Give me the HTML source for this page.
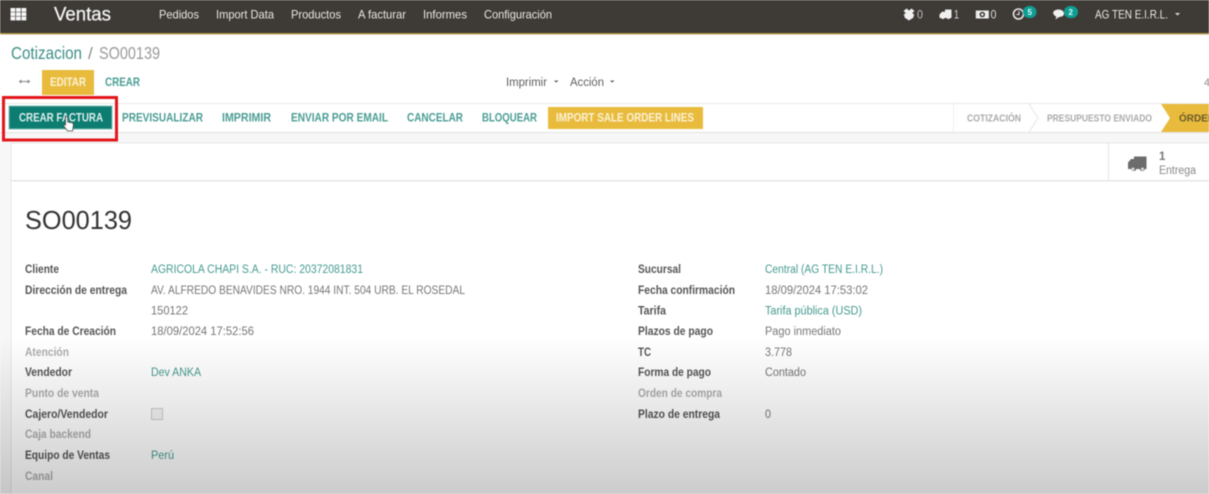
<!DOCTYPE html>
<html lang="es"><head><meta charset="utf-8"><title>Ventas</title>
<style>
html,body{margin:0;padding:0;width:1209px;height:494px;overflow:hidden;background:#fff}
svg{display:block;filter:blur(.45px)}
text{font-family:"Liberation Sans",sans-serif;font-size:11px}
.n{fill:#ebe9e5;font-size:12px}
.l{fill:#555;font-weight:bold;font-size:11.5px}
.m{fill:#adadad;font-weight:bold;font-size:11.5px}
.v{fill:#767676;font-size:11.5px}
.a{fill:#459a91;font-size:11.5px}
.b{fill:#4a9d94;font-weight:bold;font-size:11.5px}
.s{fill:#aaa;font-weight:bold;font-size:10px}
</style></head><body>
<svg width="1209" height="494" viewBox="0 0 1209 494" xmlns="http://www.w3.org/2000/svg">
<rect width="1209" height="494" fill="#fff"/>
<!-- nav -->
<rect width="1209" height="33" fill="#3e3a36"/>
<rect y="33" width="1209" height="1.500" fill="#b59a4c"/>
<g fill="#f7f7f7">
<rect x="10.500" y="8" width="4.800" height="3.800"/><rect x="16" y="8" width="4.800" height="3.800"/><rect x="21.500" y="8" width="4.800" height="3.800"/>
<rect x="10.500" y="12.300" width="4.800" height="3.800"/><rect x="16" y="12.300" width="4.800" height="3.800"/><rect x="21.500" y="12.300" width="4.800" height="3.800"/>
<rect x="10.500" y="16.600" width="4.800" height="3.800"/><rect x="16" y="16.600" width="4.800" height="3.800"/><rect x="21.500" y="16.600" width="4.800" height="3.800"/>
</g>
<text x="54" y="20.500" textLength="57" lengthAdjust="spacingAndGlyphs" style="font-size:19.500px" fill="#f6f6f6" stroke="#f6f6f6" stroke-width=".25">Ventas</text>
<text class="n" x="159" y="18.500" textLength="40" lengthAdjust="spacingAndGlyphs">Pedidos</text>
<text class="n" x="216" y="18.500" textLength="58" lengthAdjust="spacingAndGlyphs">Import Data</text>
<text class="n" x="291" y="18.500" textLength="50" lengthAdjust="spacingAndGlyphs">Productos</text>
<text class="n" x="358" y="18.500" textLength="48" lengthAdjust="spacingAndGlyphs">A facturar</text>
<text class="n" x="423" y="18.500" textLength="44" lengthAdjust="spacingAndGlyphs">Informes</text>
<text class="n" x="484" y="18.500" textLength="68" lengthAdjust="spacingAndGlyphs">Configuración</text>
<!-- systray -->
<path d="M903.500 11l3-2.500 2.500 2 2.500-2 3 2.500-2.200 2 2.200 2-1 .8v1.700l-4.500 3-4.500-3v-1.700l-1-.8 2.200-2z" fill="#f0f0f0"/>
<text class="n" x="917" y="18.500" textLength="6" lengthAdjust="spacingAndGlyphs" style="fill:#bbb">0</text>
<path d="M945 9.500h6.500v8.500h-1.500a1.700 1.700 0 0 1-3.200 0h-2.300a1.700 1.700 0 0 1-3.200 0H939.500v-3.500l2.500-2.800h3z" fill="#f0f0f0"/>
<text class="n" x="954" y="18.500" textLength="5" lengthAdjust="spacingAndGlyphs" style="fill:#ddd">1</text>
<rect x="975.800" y="10.500" width="13" height="8" fill="#eee"/><circle cx="982.300" cy="14.500" r="2.800" fill="#3e3a36"/><circle cx="982.300" cy="14.500" r="1.300" fill="#eee"/>
<text class="n" x="990.500" y="18.500" textLength="6" lengthAdjust="spacingAndGlyphs" style="fill:#ddd">0</text>
<circle cx="1018.500" cy="14" r="5" fill="none" stroke="#e8e8e8" stroke-width="1.600"/><path d="M1019 11v3.500h-2.500" fill="none" stroke="#e8e8e8"/>
<rect x="1023" y="6" width="13.500" height="12" rx="6" fill="#0f9d94"/>
<text x="1027.500" y="15" style="font-size:8px;font-weight:bold" fill="#dff">5</text>
<path d="M1053 13.500c0-2.500 2.500-4 5.500-4s5.500 1.500 5.500 4-2.500 3.500-5 3.500l-3.500 2.500.8-3c-1.600-.5-2.800-1.500-2.800-3z" fill="#f0f0f0"/>
<rect x="1064" y="6" width="14" height="12" rx="6" fill="#0f9d94"/>
<text x="1068.500" y="15" style="font-size:8px;font-weight:bold" fill="#dff">2</text>
<text class="n" x="1095" y="18.500" textLength="73" lengthAdjust="spacingAndGlyphs">AG TEN E.I.R.L.</text>
<path d="M1175 13h5l-2.500 2.500z" fill="#ddd"/>
<!-- breadcrumb -->
<text x="11" y="59" textLength="71" lengthAdjust="spacingAndGlyphs" style="font-size:17.500px" fill="#3f8f88">Cotizacion</text>
<text x="88" y="59" style="font-size:17px" fill="#8a8a8a">/</text>
<text x="99" y="59" textLength="61" lengthAdjust="spacingAndGlyphs" style="font-size:17.500px" fill="#9a9a9a">SO00139</text>
<!-- toolbar -->
<path d="M19.500 81.500h10M21.500 80l-2 1.500 2 1.500M27.500 80l2 1.500-2 1.500" fill="none" stroke="#888" stroke-width="1"/>
<rect x="42" y="70" width="52" height="25" fill="#e9bb3d"/>
<text x="50" y="86" textLength="36" lengthAdjust="spacingAndGlyphs" style="font-size:11.500px;font-weight:bold" fill="#fbf2d4">EDITAR</text>
<text class="b" x="105" y="86" textLength="35" lengthAdjust="spacingAndGlyphs">CREAR</text>
<text x="506" y="86" textLength="41" lengthAdjust="spacingAndGlyphs" style="font-size:11.500px" fill="#5e5e5e">Imprimir</text>
<path d="M554 80.500h4.500l-2.250 2.200z" fill="#666"/>
<text x="570" y="86" textLength="34" lengthAdjust="spacingAndGlyphs" style="font-size:11.500px" fill="#5e5e5e">Acción</text>
<path d="M610 80.500h4.500l-2.250 2.200z" fill="#666"/>
<text x="1204" y="86" style="font-size:11px" fill="#888">4</text>
<!-- status bar -->
<rect x="0" y="132.500" width="1209" height="361" fill="#f7f7f7"/>
<rect x="0" y="103" width="1209" height="1" fill="#e8e8e8"/>
<rect x="0" y="132" width="1209" height="1" fill="#e2e2e2"/>
<rect x="9" y="106" width="103" height="23" fill="#0d7d72" stroke="#7fbdb6" stroke-width="1"/>
<text x="19" y="121.500" textLength="84" lengthAdjust="spacingAndGlyphs" style="font-size:11.500px;font-weight:bold" fill="#dceeec">CREAR FACTURA</text>
<text class="b" x="122" y="121.500" textLength="81" lengthAdjust="spacingAndGlyphs">PREVISUALIZAR</text>
<text class="b" x="222" y="121.500" textLength="49" lengthAdjust="spacingAndGlyphs">IMPRIMIR</text>
<text class="b" x="291" y="121.500" textLength="97" lengthAdjust="spacingAndGlyphs">ENVIAR POR EMAIL</text>
<text class="b" x="407" y="121.500" textLength="56" lengthAdjust="spacingAndGlyphs">CANCELAR</text>
<text class="b" x="482" y="121.500" textLength="55" lengthAdjust="spacingAndGlyphs">BLOQUEAR</text>
<rect x="548" y="107" width="155" height="22" fill="#e9bb3d"/>
<text x="556" y="121.500" textLength="138" lengthAdjust="spacingAndGlyphs" style="font-size:11.500px;font-weight:bold" fill="#fbf2d4">IMPORT SALE ORDER LINES</text>
<rect x="953" y="104" width="1" height="28" fill="#f0f0f0"/>
<text class="s" x="967" y="121.500" textLength="54" lengthAdjust="spacingAndGlyphs">COTIZACIÓN</text>
<path d="M1029 104l9 14-9 14" fill="none" stroke="#e6e6e6"/>
<text class="s" x="1047" y="121.500" textLength="105" lengthAdjust="spacingAndGlyphs">PRESUPUESTO ENVIADO</text>
<path d="M1161 104h48v28h-48l9-14z" fill="#e9bb3d"/>
<text x="1179" y="121.500" textLength="36" lengthAdjust="spacingAndGlyphs" style="font-size:10.500px;font-weight:bold" fill="#6a5a2a">ÓRDEN</text>
<!-- red box + cursor -->
<rect x="3.500" y="97.500" width="113" height="42.500" fill="none" stroke="#e3161c" stroke-width="3"/>
<path d="M65.500 125v-7.500c0-1.500 2.200-1.500 2.200 0v4.500l3.800.6c1.300.2 2 1 1.900 2.300l-.7 6h-5.200l-3.500-4.500c-.9-1.300.6-2.500 1.500-1.400z" fill="#fff" stroke="#444" stroke-width=".8"/>
<!-- card -->
<rect x="11" y="143" width="1203" height="356" fill="#fff" stroke="#e6e6e6"/>
<rect x="11" y="180" width="1198" height="1.500" fill="#e6e6e6"/>
<rect x="1108" y="143" width="1" height="37" fill="#e4e4e4"/>
<path d="M1134 156.500h12.500V169h-1.500a2.800 2.800 0 0 1-5.400 0h-3.200a2.800 2.800 0 0 1-5.400 0H1128v-6.500l3-3.500h3z" fill="#6c6c6c"/>
<circle cx="1133" cy="169" r="1.500" fill="#ddd"/><circle cx="1142.500" cy="169" r="1.500" fill="#ddd"/>
<text x="1159" y="160" style="font-size:11.500px;font-weight:bold" fill="#777">1</text>
<text x="1159" y="174" textLength="37" lengthAdjust="spacingAndGlyphs" style="font-size:11.500px" fill="#888">Entrega</text>
<text x="25" y="229" textLength="107" lengthAdjust="spacingAndGlyphs" style="font-size:26px" fill="#333">SO00139</text>
<!-- left -->
<text class="l" x="25" y="273" textLength="34" lengthAdjust="spacingAndGlyphs">Cliente</text>
<text class="a" x="151" y="273" textLength="212" lengthAdjust="spacingAndGlyphs">AGRICOLA CHAPI S.A. - RUC: 20372081831</text>
<text class="l" x="25" y="294" textLength="102" lengthAdjust="spacingAndGlyphs">Dirección de entrega</text>
<text class="v" x="151" y="294" textLength="314" lengthAdjust="spacingAndGlyphs">AV. ALFREDO BENAVIDES NRO. 1944 INT. 504 URB. EL ROSEDAL</text>
<text class="v" x="151" y="314.500" textLength="37" lengthAdjust="spacingAndGlyphs">150122</text>
<text class="l" x="25" y="335" textLength="91" lengthAdjust="spacingAndGlyphs">Fecha de Creación</text>
<text class="v" x="151" y="335" textLength="103" lengthAdjust="spacingAndGlyphs">18/09/2024 17:52:56</text>
<text class="m" x="25" y="356" textLength="44" lengthAdjust="spacingAndGlyphs">Atención</text>
<text class="l" x="25" y="376" textLength="47" lengthAdjust="spacingAndGlyphs">Vendedor</text>
<text class="a" x="151" y="376" textLength="50" lengthAdjust="spacingAndGlyphs">Dev ANKA</text>
<text class="m" x="25" y="397" textLength="74" lengthAdjust="spacingAndGlyphs">Punto de venta</text>
<text class="l" x="25" y="418" textLength="83" lengthAdjust="spacingAndGlyphs">Cajero/Vendedor</text>
<rect x="151.500" y="408.500" width="11" height="11" fill="#f4f4f4" stroke="#ccc"/>
<text class="m" x="25" y="438" textLength="66" lengthAdjust="spacingAndGlyphs">Caja backend</text>
<text class="l" x="25" y="459" textLength="85" lengthAdjust="spacingAndGlyphs">Equipo de Ventas</text>
<text class="a" x="151" y="459" textLength="23" lengthAdjust="spacingAndGlyphs">Perú</text>
<text class="m" x="25" y="480" textLength="28" lengthAdjust="spacingAndGlyphs">Canal</text>
<!-- right -->
<text class="l" x="638" y="273" textLength="43" lengthAdjust="spacingAndGlyphs">Sucursal</text>
<text class="a" x="765" y="273" textLength="118" lengthAdjust="spacingAndGlyphs">Central (AG TEN E.I.R.L.)</text>
<text class="l" x="638" y="294" textLength="97" lengthAdjust="spacingAndGlyphs">Fecha confirmación</text>
<text class="v" x="765" y="294" textLength="103" lengthAdjust="spacingAndGlyphs">18/09/2024 17:53:02</text>
<text class="l" x="638" y="314.500" textLength="28" lengthAdjust="spacingAndGlyphs">Tarifa</text>
<text class="a" x="765" y="314.500" textLength="97" lengthAdjust="spacingAndGlyphs">Tarifa pública (USD)</text>
<text class="l" x="638" y="335" textLength="75" lengthAdjust="spacingAndGlyphs">Plazos de pago</text>
<text class="v" x="765" y="335" textLength="76" lengthAdjust="spacingAndGlyphs">Pago inmediato</text>
<text class="l" x="638" y="356" textLength="13" lengthAdjust="spacingAndGlyphs">TC</text>
<text class="v" x="765" y="356" textLength="27" lengthAdjust="spacingAndGlyphs">3.778</text>
<text class="l" x="638" y="376" textLength="73" lengthAdjust="spacingAndGlyphs">Forma de pago</text>
<text class="v" x="765" y="376" textLength="41" lengthAdjust="spacingAndGlyphs">Contado</text>
<text class="m" x="638" y="397" textLength="84" lengthAdjust="spacingAndGlyphs">Orden de compra</text>
<text class="l" x="638" y="418" textLength="82" lengthAdjust="spacingAndGlyphs">Plazo de entrega</text>
<text class="v" x="765" y="418" textLength="6" lengthAdjust="spacingAndGlyphs">0</text>
<!-- bottom shade -->
<defs><linearGradient id="g" x1="0" y1="0" x2="0" y2="1"><stop offset="0" stop-color="#000" stop-opacity="0"/><stop offset="1" stop-color="#000" stop-opacity=".2"/></linearGradient></defs>
<rect x="0" y="337" width="1209" height="157" fill="url(#g)"/>
</svg>
</body></html>
